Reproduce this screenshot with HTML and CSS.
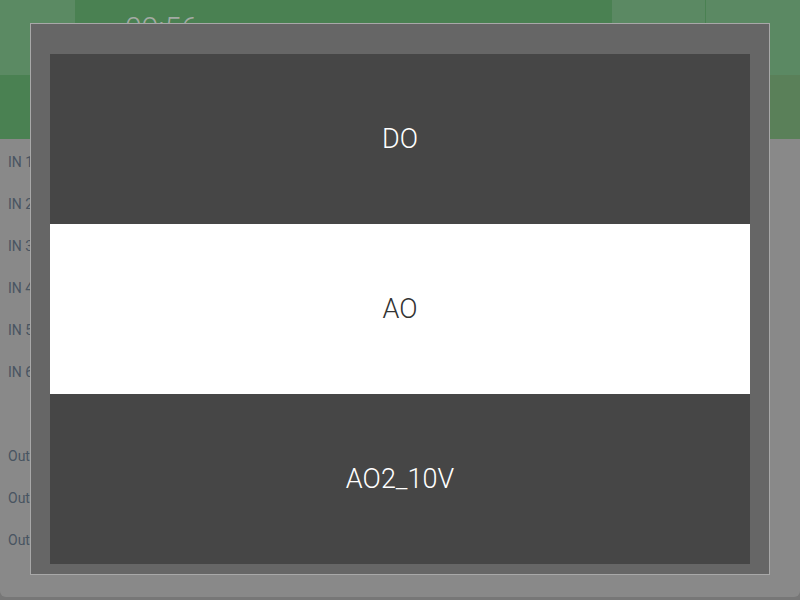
FILE: index.html
```html
<!DOCTYPE html>
<html>
  <head>
    <title>Output type</title>
    <link rel="stylesheet" href="styles.css">
  </head>
  <body>
    <div class="page">
      <header class="topbar">
        <div class="barRow">
          <div class="menuBtn"></div>
          <div class="clock">09:56</div>
          <div class="barBtn"></div>
          <div class="barDivider"></div>
          <div class="barBtn last"></div>
        </div>
        <div class="barRow sub">
          <div class="subSpace"></div>
          <div class="subBtn"></div>
        </div>
      </header>

      <main class="card">
        <div class="ioRow">IN 1</div>
        <div class="ioRow">IN 2</div>
        <div class="ioRow">IN 3</div>
        <div class="ioRow">IN 4</div>
        <div class="ioRow">IN 5</div>
        <div class="ioRow">IN 6</div>
        <div class="ioRow"></div>
        <div class="ioRow">Out 1</div>
        <div class="ioRow">Out 2</div>
        <div class="ioRow">Out 3</div>
      </main>
    </div>

    <!-- output type picker -->
    <div class="modal">
      <ul class="choiceList">
        <li class="choice">DO</li>
        <li class="choice selected">AO</li>
        <li class="choice">AO2_10V</li>
      </ul>
    </div>
  </body>
</html>
```

FILE: styles.css
```css
*{
  box-sizing: border-box;
}

html, body{
  margin: 0;
  padding: 0;
}

body{
  width: 800px;
  height: 600px;
  overflow: hidden;
  background: #777777;
  font-family: Roboto, "Liberation Sans", sans-serif;
}

.page{
  display: flex;
  flex-direction: column;
}

.topbar{
  height: 139px;
  background: #4a8152;
  display: flex;
  flex-direction: column;
}

.barRow{
  height: 75px;
  display: flex;
  flex-direction: row;
}

.barRow.sub{
  height: 64px;
}

.menuBtn{
  width: 75px;
  background: #5b8a63;
}

.clock{
  flex: 1;
  padding: 10px 0 0 50px;
  font-size: 30px;
  font-weight: 300;
  color: #a3aaa4;
}

.barBtn{
  width: 93px;
  background: #5b8963;
}

.barBtn.last{
  width: 94px;
}

.barDivider{
  width: 1px;
  background: #4a8152;
}

.subSpace{
  flex: 1;
}

.subBtn{
  width: 94px;
  background: #5a8059;
}

.card{
  height: 458px;
  background: #898989;
  border-radius: 0 0 6px 6px;
  display: flex;
  flex-direction: column;
}

.ioRow{
  height: 42px;
  padding: 3px 0 0 8px;
  display: flex;
  align-items: center;
  font-size: 14px;
  color: #485461;
}

/* modal */
.modal{
  position: fixed;
  left: 30px;
  top: 23px;
  width: 740px;
  height: 552px;
  border: 1px solid #a8a8a8;
  background: #666666;
  padding: 30px 19px 10px 19px;
}

.choiceList{
  list-style: none;
  margin: 0;
  padding: 0;
  display: flex;
  flex-direction: column;
}

.choice{
  height: 170px;
  display: flex;
  align-items: center;
  justify-content: center;
  background: #464646;
  color: #ffffff;
  font-size: 27px;
  font-weight: 300;
}

.choice.selected{
  background: #ffffff;
  color: #333333;
}
```
